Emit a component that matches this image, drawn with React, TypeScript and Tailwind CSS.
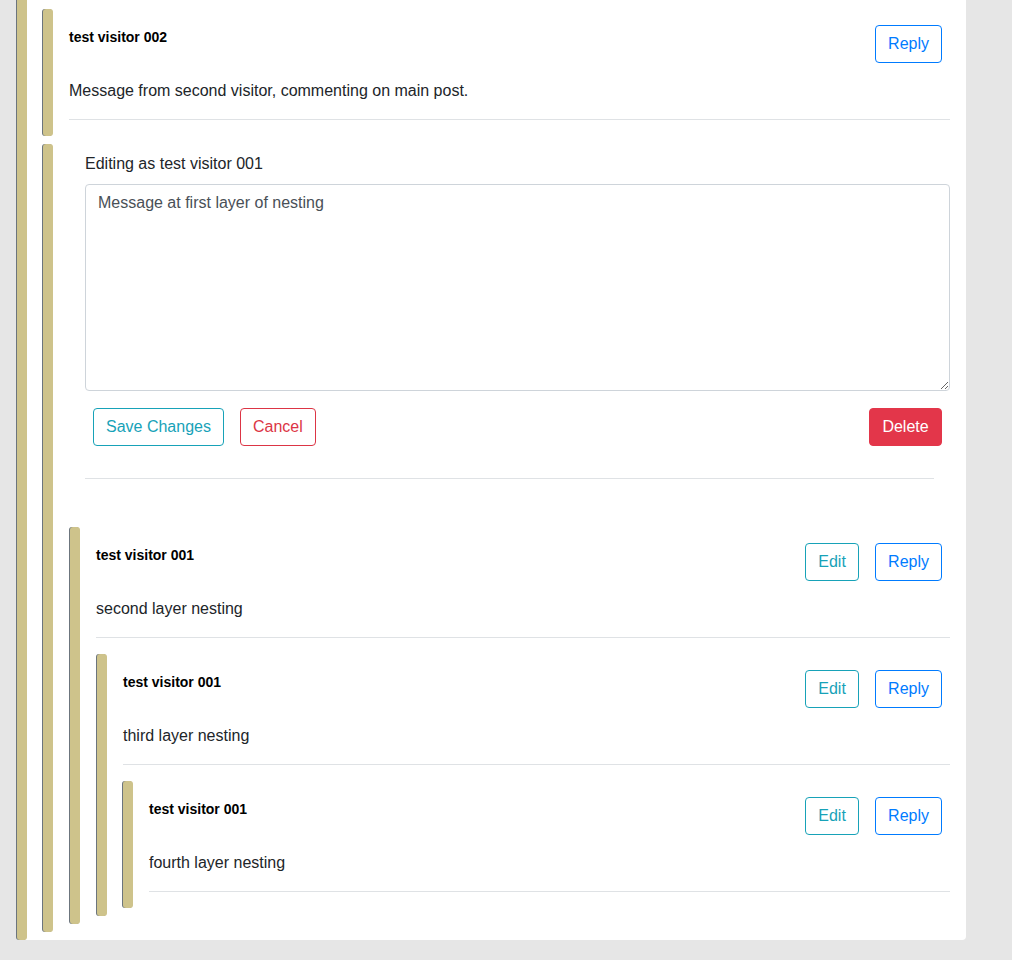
import React from "react";

const Bar = ({ outer }: { outer?: boolean }) => (
  <div
    className={
      outer
        ? "w-[10px] shrink-0 rounded-b-[3px] bg-[#cec38b] shadow-[-1px_0_0_#6c757d]"
        : "w-[10px] shrink-0 rounded-[3px] bg-[#cec38b] shadow-[-1px_0_0_#6c757d]"
    }
  />
);

const Btn = ({ kind, children }: { kind: "reply" | "edit" | "cancel" | "delete" | "save"; children: React.ReactNode }) => {
  const base =
    "h-[38px] px-[12px] border rounded-[4px] text-[16px] leading-6 whitespace-nowrap";
  const cls =
    kind === "reply"
      ? "border-[#007bff] text-[#007bff] bg-white"
      : kind === "edit"
      ? "w-[54px] border-[#17a2b8] text-[#17a2b8] bg-white"
      : kind === "save"
      ? "border-[#17a2b8] text-[#17a2b8] bg-white"
      : kind === "cancel"
      ? "border-[#dc3545] text-[#dc3545] bg-white"
      : "w-[73px] border-[#e3364a] bg-[#e3364a] text-white";
  return <button className={`${base} ${cls}`}>{children}</button>;
};

function Comment({
  name,
  text,
  edit,
  first,
  nudge,
  children,
}: {
  name: string;
  text: string;
  edit?: boolean;
  first?: boolean;
  nudge?: boolean;
  children?: React.ReactNode;
}) {
  return (
    <div className={`flex ${first ? "mt-[9px]" : "mt-[8px]"} ${nudge ? "ml-[1px]" : ""}`}>
      <Bar />
      <div className="flex-1 min-w-0 pl-[16px] pb-[8px] flex flex-col">
        <div className="pt-[16px] flex justify-between items-start pr-[8px]">
          <div className="pt-[2px] text-[14px] leading-[21px] font-bold text-black">{name}</div>
          <div className="flex gap-[16px]">
            {edit && <Btn kind="edit">Edit</Btn>}
            <Btn kind="reply">Reply</Btn>
          </div>
        </div>
        <p className="mt-[16px] text-[16px] leading-6 text-[#212529]">{text}</p>
        <hr className="mt-[16px] mb-[8px] border-0 border-t border-[#dfe2e5]" />
        {children}
      </div>
    </div>
  );
}

export default function App() {
  return (
    <div className="min-h-[960px] bg-[#e6e6e6] font-['Liberation_Sans',Arial,sans-serif] text-[#212529]">
      <div className="ml-[17px] w-[949px] flex bg-white rounded-br-[4px]">
        <Bar outer />
        <div className="flex-1 min-w-0 pl-[16px] pr-[16px] pb-[8px] flex flex-col">
          <Comment
            first
            name="test visitor 002"
            text="Message from second visitor, commenting on main post."
          />
          <div className="flex mt-[8px]">
            <Bar />
            <div className="flex-1 min-w-0 pl-[16px] pb-[8px] flex flex-col">
              <div className="pl-[16px] pt-[8px] flex flex-col">
                <div className="text-[16px] leading-6 text-[#212529]">Editing as test visitor 001</div>
                <textarea
                  className="mt-[8px] block w-full h-[207px] border border-[#ced4da] rounded-[4px] px-[12px] py-[6px] text-[16px] leading-6 text-[#495057] resize-y outline-none"
                  defaultValue="Message at first layer of nesting"
                />
                <div className="mt-[17px] flex px-[8px]">
                  <div className="flex gap-[16px]">
                    <Btn kind="save">Save Changes</Btn>
                    <Btn kind="cancel">Cancel</Btn>
                  </div>
                  <div className="ml-auto">
                    <Btn kind="delete">Delete</Btn>
                  </div>
                </div>
                <hr className="mt-[32px] mr-[16px] border-0 border-t border-[#dfe2e5]" />
              </div>
              <div className="mt-[40px] flex flex-col">
                <Comment nudge edit name="test visitor 001" text="second layer nesting">
                  <Comment nudge edit name="test visitor 001" text="third layer nesting">
                    <Comment edit name="test visitor 001" text="fourth layer nesting" />
                  </Comment>
                </Comment>
              </div>
            </div>
          </div>
        </div>
      </div>
    </div>
  );
}
